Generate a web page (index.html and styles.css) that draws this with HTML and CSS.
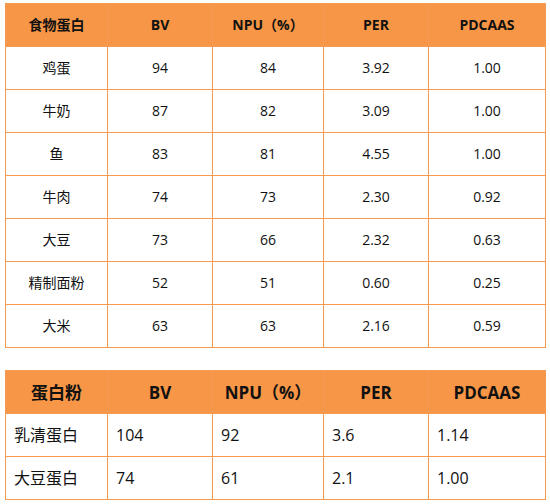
FILE: index.html
```html
<!DOCTYPE html>
<html>
<head>
<meta charset="utf-8">
<link rel="stylesheet" href="styles.css">
</head>
<body>
<div class="page">
  <table class="grid grid-center">
    <colgroup><col class="c1"><col class="c2"><col class="c3"><col class="c4"><col class="c5"></colgroup>
    <thead>
      <tr><th>食物蛋白</th><th>BV</th><th>NPU（%）</th><th>PER</th><th>PDCAAS</th></tr>
    </thead>
    <tbody>
      <tr><td>鸡蛋</td><td>94</td><td>84</td><td>3.92</td><td>1.00</td></tr>
      <tr><td>牛奶</td><td>87</td><td>82</td><td>3.09</td><td>1.00</td></tr>
      <tr><td>鱼</td><td>83</td><td>81</td><td>4.55</td><td>1.00</td></tr>
      <tr><td>牛肉</td><td>74</td><td>73</td><td>2.30</td><td>0.92</td></tr>
      <tr><td>大豆</td><td>73</td><td>66</td><td>2.32</td><td>0.63</td></tr>
      <tr><td>精制面粉</td><td>52</td><td>51</td><td>0.60</td><td>0.25</td></tr>
      <tr><td>大米</td><td>63</td><td>63</td><td>2.16</td><td>0.59</td></tr>
    </tbody>
  </table>
  <table class="grid grid-left">
    <colgroup><col class="c1"><col class="c2"><col class="c3"><col class="c4"><col class="c5"></colgroup>
    <thead>
      <tr><th>蛋白粉</th><th>BV</th><th>NPU（%）</th><th>PER</th><th>PDCAAS</th></tr>
    </thead>
    <tbody>
      <tr><td>乳清蛋白</td><td>104</td><td>92</td><td>3.6</td><td>1.14</td></tr>
      <tr><td>大豆蛋白</td><td>74</td><td>61</td><td>2.1</td><td>1.00</td></tr>
    </tbody>
  </table>
</div>
</body>
</html>
```
FILE: styles.css
```css
html, body {
  margin: 0;
  padding: 0;
  background: #ffffff;
}
.page {
  padding: 3px 5px 0 5px;
  display: flex;
  flex-direction: column;
  gap: 22px;
  font-family: "Open Sans", "Noto Sans CJK SC", sans-serif;
  color: #111111;
}
.grid {
  border-collapse: collapse;
  table-layout: fixed;
  width: 540px;
}
.c1 { width: 102px; }
.c2 { width: 105px; }
.c3 { width: 111px; }
.c4 { width: 105px; }
.c5 { width: 117px; }
.grid th,
.grid td {
  border: 1px solid #f59a52;
  height: 43px;
  padding: 0;
  box-sizing: border-box;
  line-height: 1;
  white-space: nowrap;
}
.grid th {
  background: #f79646;
  font-weight: 700;
  color: #111111;
}
.grid-center th,
.grid-center td {
  text-align: center;
  font-size: 14px;
}
.grid-center td {
  font-size: 14px;
}
.grid-left th {
  font-size: 17px;
  text-align: center;
}
.grid-left td {
  font-size: 16px;
  text-align: left;
  padding-left: 8px;
}
```
